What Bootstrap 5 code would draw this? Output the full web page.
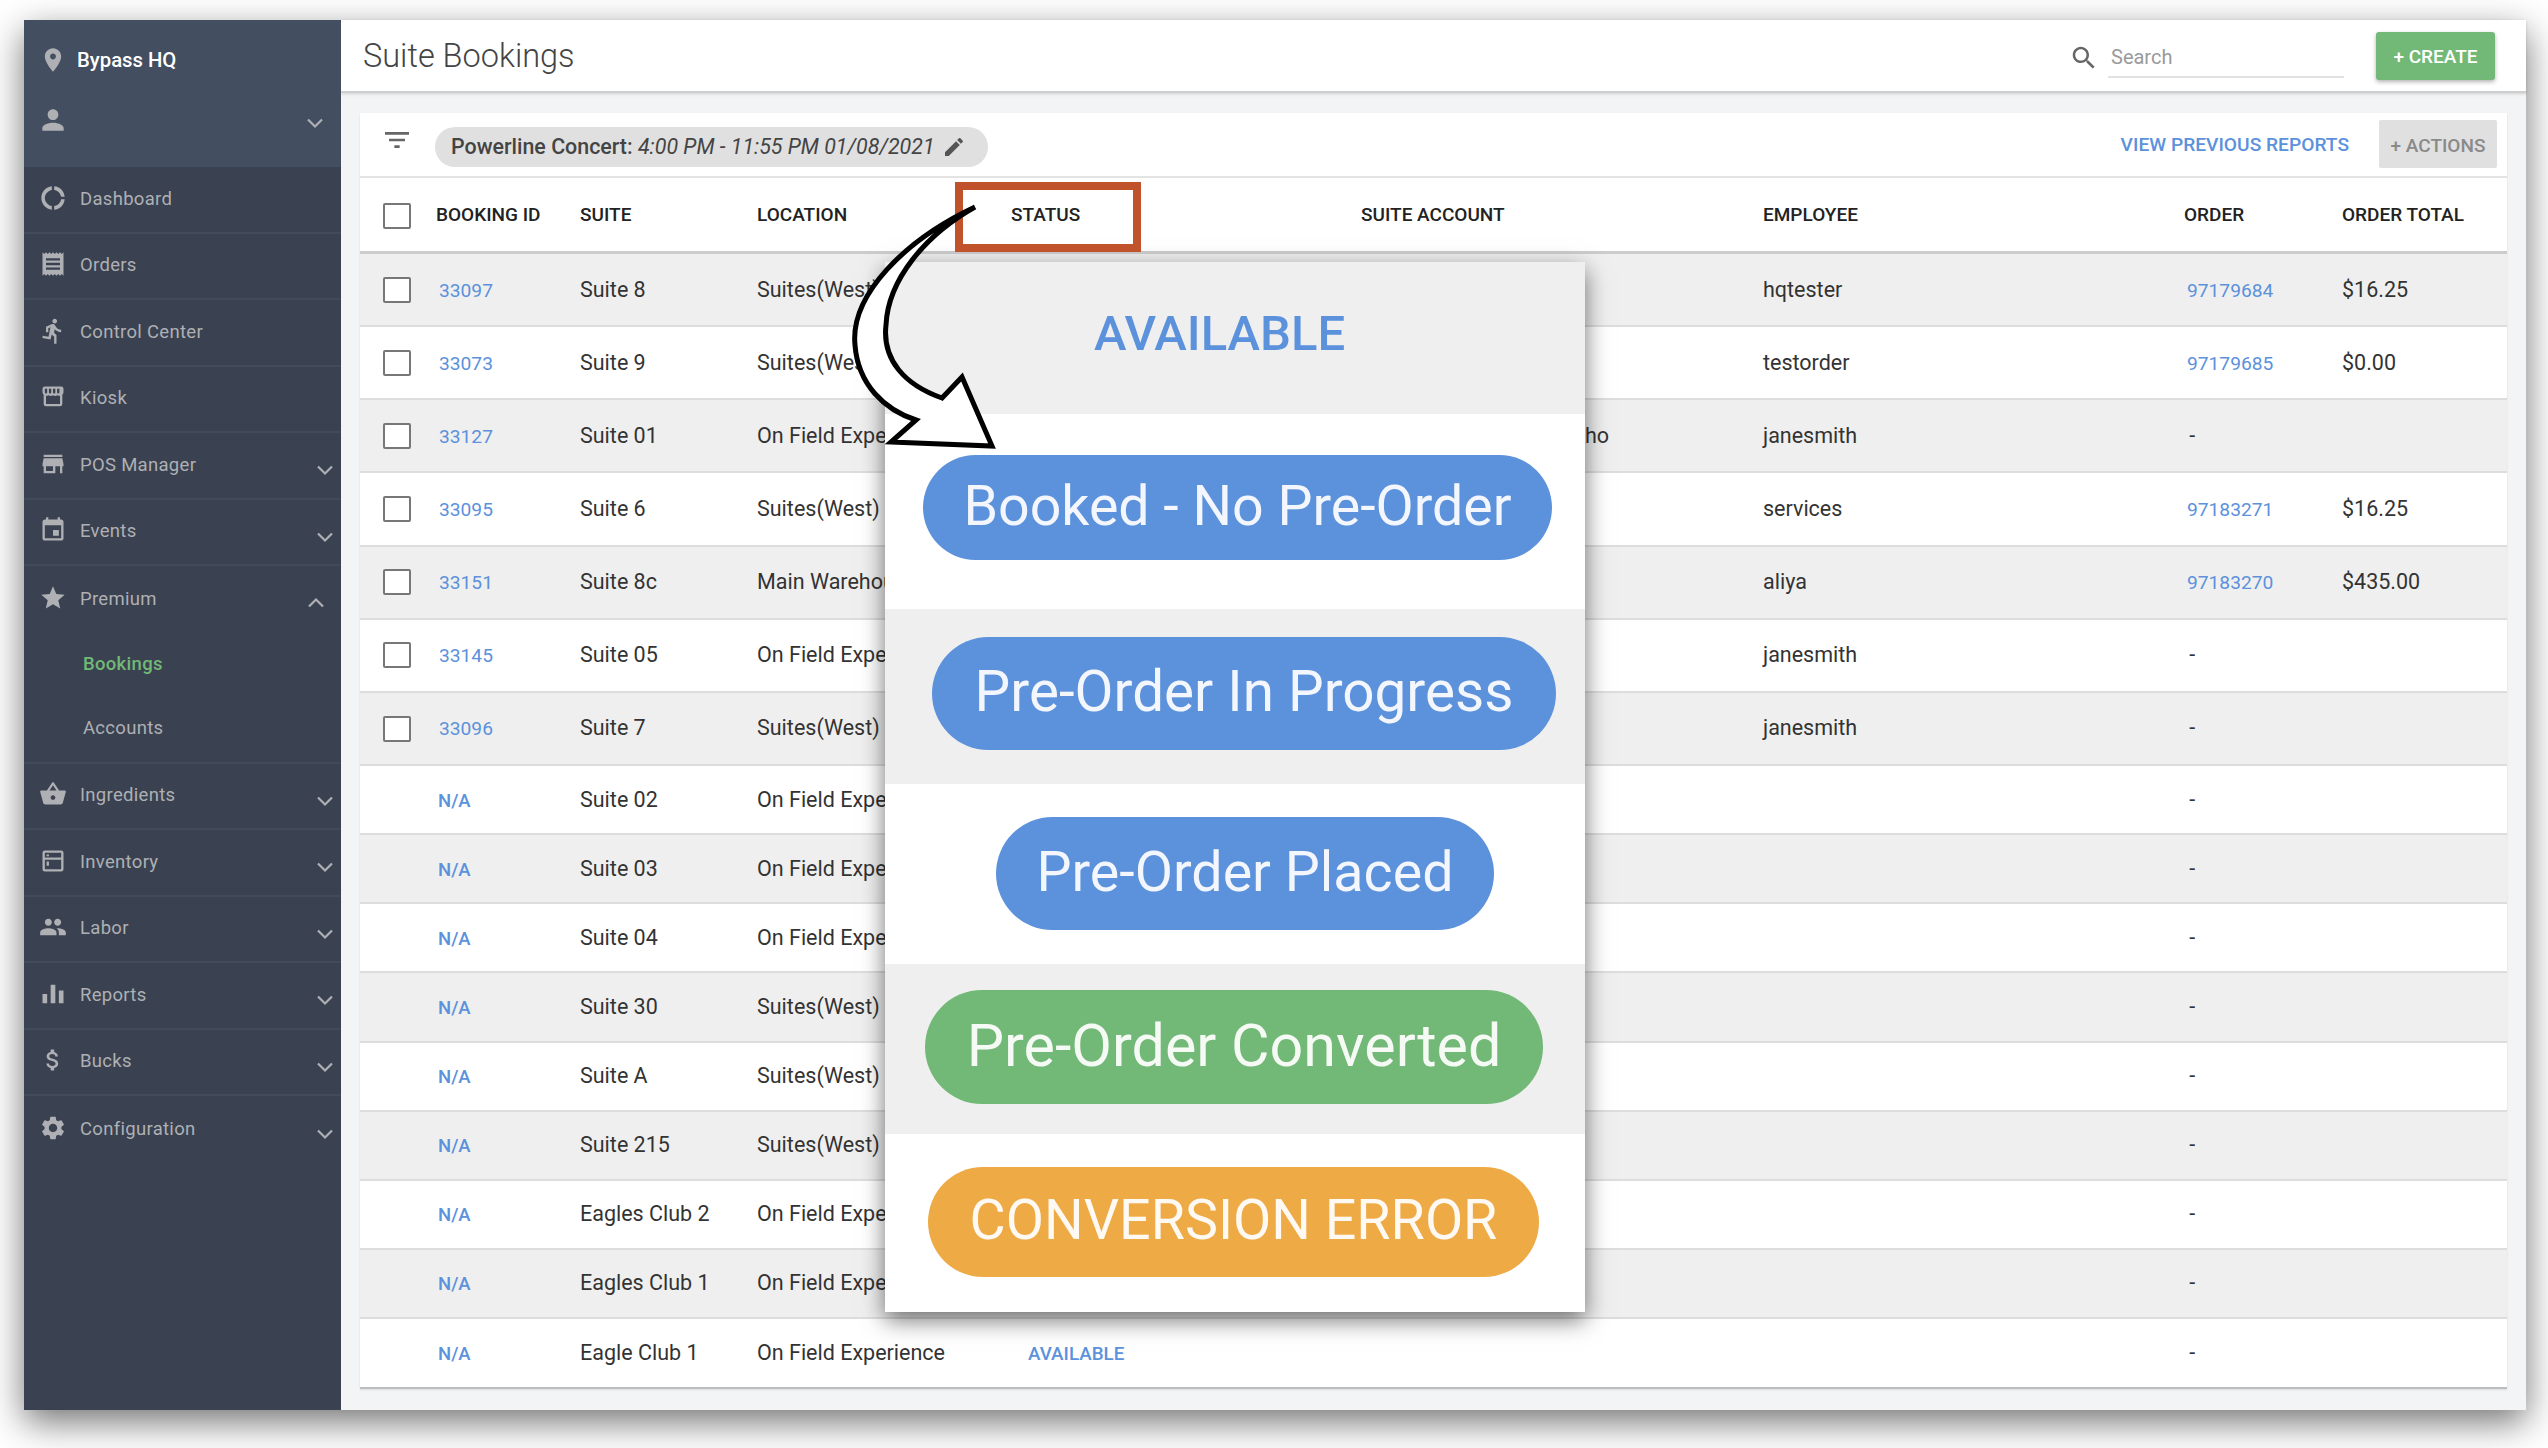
<!DOCTYPE html>
<html lang="en"><head><meta charset="utf-8"><title>Suite Bookings</title>
<link href="https://cdn.jsdelivr.net/npm/bootstrap@5.3.0/dist/css/bootstrap.min.css" rel="stylesheet">
<style>
html,body{height:100%}
body{background:#fff;font-family:Roboto,"Liberation Sans",sans-serif;color:#333;position:relative;overflow:hidden}
.shell{position:absolute;left:24px;top:20px;width:2502px;height:1390px;display:flex;box-shadow:0 12px 34px rgba(0,0,0,.55);background:#f3f4f6}
.side{width:317px;flex:none;background:#3a4150;color:#aeb0b4;z-index:2}
.side-head{height:147px;background:#434e60;position:relative}
.ico{fill:currentColor;flex:none;display:block}
.brand{height:80px;padding-left:15px;gap:10px;color:#fff;font-weight:500;font-size:20.3px}
.brand .ico{color:#aeb0b4}
.who{padding-left:13px;padding-right:14px;height:40px}
.who .chev{margin-top:6px!important}
.navrow{height:66.5px;border-bottom:2px solid #414b5c;padding-left:15px;padding-right:4px;font-size:18.5px;letter-spacing:.3px;gap:13px;color:#aeb0b4}
.navrow .ico{margin-top:-3px}
.navrow .lbl{flex:1;padding-top:1px}
.chev{width:24px;height:24px;fill:none;stroke:#aeb0b4;stroke-width:2.2;flex:none;margin-top:10px}
.chev.open{margin-right:9px;margin-top:8px}
.sub{height:64.5px;padding-left:59px;font-size:18.5px;letter-spacing:.3px}
.sub.on{color:#72b876;font-weight:500}
.subs{border-bottom:2px solid #414b5c}
.main{flex:1;min-width:0;display:flex;flex-direction:column}
.top{height:73px;background:#fff;border-bottom:2px solid #cfcfcf;box-shadow:0 1px 3px rgba(0,0,0,.15);padding-left:22px;padding-right:31px}
.ttl{font-weight:300;font-size:32.5px;color:#444;margin:0;line-height:1;padding-top:1px}
.srch-ico{color:#666;margin-top:5px;margin-right:-3px}
.srch{width:236px;height:40px;border:0;border-bottom:2px solid #e2e2e2;border-radius:0;padding:0 0 0 3px;font-size:20px;font-family:inherit;margin-left:12px;margin-right:32px;margin-top:5px;box-shadow:none}
.srch::placeholder{color:#9a9a9a}
.btn-make{background:#72b876;color:#fff;border:0;border-radius:3px;width:119px;height:48px;font-size:19px;font-weight:500;padding:2px 0 0;margin-top:1px;box-shadow:0 2px 4px rgba(0,0,0,.3)}
.sheet{margin:20px 19px 21px 19px;background:#fff;flex:1;border-bottom:2px solid #bdbdbd;box-shadow:0 1px 2px rgba(0,0,0,.1)}
.bar{height:65px;border-bottom:2px solid #e4e4e4;padding-left:21px;padding-right:10px}
.chip{height:40px;margin-left:22px;margin-top:5px;background:#e0e0e0;border-radius:20px;padding:0 16px;font-size:21.4px;gap:7px;width:553px;color:#444;white-space:nowrap}
.chip b{font-weight:500}
.prev{color:#5c91dc;font-weight:500;font-size:19.2px;margin-right:30px;margin-top:3px;text-decoration:none}
.btn-acts{background:#e0e0e0;color:#8a8a8a;border:0;border-radius:2px;width:118px;height:48px;font-size:19px;font-weight:500;padding:3px 0 0}
.grid{table-layout:fixed;width:2147px;margin:0;--bs-table-striped-bg:#efefef;--bs-table-striped-color:#333;--bs-table-border-color:#ddd;color:#333}
.grid th{height:75px;font-size:19px;font-weight:500;vertical-align:middle;padding:2px 0 0;border-bottom:3px solid #ccc;color:#222}
.grid td{padding:0;vertical-align:middle;font-size:21.5px;border-bottom:2px solid #ddd;white-space:nowrap}
.tall td{height:73.2px}
.low td{height:69.1px}
.c0{width:76px;padding-left:23px!important}.c1{width:144px}.c2{width:177px}.c3{width:254px}.c4{width:350px}.c5{width:402px}.c6{width:421px}.c7{width:158px}.c8{width:165px}
.tick{width:28px;height:26px;border:2px solid #777;border-radius:2px;background:#fff;display:block}
.lnk{color:#5c91dc;text-decoration:none;font-size:19.2px;padding-left:3px}
.na{font-weight:500;font-size:18.5px;padding-left:2px}
.frag{padding-left:224px}
.stat{color:#5c91dc;font-size:18.8px;padding-left:17px;font-weight:500}
.pop{position:absolute;left:885px;top:262px;width:700px;height:1050px;background:#fff;box-shadow:0 8px 22px rgba(0,0,0,.55);z-index:5}
.band{position:relative}
.band.gr{background:#efefef}
.b1{height:152px;color:#5c91dc;font-size:49px;font-weight:500;padding-top:35px;padding-left:209px}
.b2{height:195px;padding-top:41px;padding-left:38px}
.b3{height:175px;padding-top:28px;padding-left:47px}
.b4{height:180px;padding-top:33px;padding-left:111px}
.b5{height:170px;padding-top:26px;padding-left:40px}
.b6{height:178px;padding-top:33px;padding-left:43px}
.pil{display:flex;align-items:center;justify-content:center;color:rgba(255,255,255,.93);border-radius:60px;white-space:nowrap;background:#5c91dc;line-height:1;padding-bottom:2px}
.p2{width:629px;height:105px;font-size:55.5px}.p3{width:624px;height:113px;font-size:56.6px}.p4{width:498px;height:113px;font-size:55.6px}.p5{width:618px;height:114px;font-size:59.2px;background:#72b876}.p6{width:611px;height:110px;font-size:55.6px;background:#eeaa45}
.redbox{position:absolute;left:955px;top:182px;width:186px;height:70px;border:8px solid #c0522c;z-index:6}
.arrow{position:absolute;left:840px;top:195px;width:170px;height:265px;z-index:7}
</style></head>
<body>
<svg width="0" height="0" class="position-absolute"><defs>
<symbol id="i-place" viewBox="0 0 24 24"><path d="M12 2C8.13 2 5 5.13 5 9c0 5.25 7 13 7 13s7-7.75 7-13c0-3.87-3.13-7-7-7zm0 9.5c-1.38 0-2.5-1.12-2.5-2.5s1.12-2.5 2.5-2.5 2.5 1.12 2.5 2.5-1.12 2.5-2.5 2.5z"/></symbol>
<symbol id="i-person" viewBox="0 0 24 24"><path d="M12 12c2.21 0 4-1.79 4-4s-1.79-4-4-4-4 1.79-4 4 1.79 4 4 4zm0 2c-2.67 0-8 1.34-8 4v2h16v-2c0-2.66-5.33-4-8-4z"/></symbol>
<symbol id="i-donut" viewBox="0 0 24 24"><path d="M11 5.08V2c-5 .5-9 4.81-9 10s4 9.5 9 10v-3.08c-3-.48-6-3.4-6-6.92s3-6.44 6-6.92zM18.97 11H22c-.47-5-4-8.53-9-9v3.08C16 5.51 18.54 8 18.97 11zM13 18.92V22c5-.47 8.53-4 9-9h-3.03c-.43 3-2.97 5.49-5.97 5.92z"/></symbol>
<symbol id="i-receipt" viewBox="0 0 24 24"><path d="M18 17H6v-2h12v2zm0-4H6v-2h12v2zm0-4H6V7h12v2zM3 22l1.5-1.5L6 22l1.5-1.5L9 22l1.5-1.5L12 22l1.5-1.5L15 22l1.5-1.5L18 22l1.5-1.5L21 22V2l-1.5 1.5L18 2l-1.5 1.5L15 2l-1.5 1.5L12 2l-1.5 1.5L9 2 7.5 3.5 6 2 4.5 3.5 3 2v20z"/></symbol>
<symbol id="i-run" viewBox="0 0 24 24"><path d="M13.49 5.48c1.1 0 2-.9 2-2s-.9-2-2-2-2 .9-2 2 .9 2 2 2zm-3.6 13.9l1-4.4 2.1 2v6h2v-7.5l-2.1-2 .6-3c1.3 1.5 3.3 2.5 5.5 2.5v-2c-1.9 0-3.5-1-4.3-2.4l-1-1.6c-.4-.6-1-1-1.7-1-.3 0-.5.1-.8.1l-5.2 2.2v4.7h2v-3.4l1.8-.7-1.6 8.1-4.9-1-.4 2 7 1.4z"/></symbol>
<symbol id="i-kiosk" viewBox="0 0 24 24"><path d="M5 3h14a2 2 0 0 1 2 2v3a2.5 2.5 0 0 1-1 2v8a2 2 0 0 1-2 2H6a2 2 0 0 1-2-2v-8a2.5 2.5 0 0 1-1-2V5a2 2 0 0 1 2-2zm0 2v3a1 1 0 0 0 2 0V5H5zm3.5 0v3a1 1 0 0 0 2 0V5h-2zm3.5 0v3a1 1 0 0 0 2 0V5h-2zm3.5 0v3a1 1 0 0 0 2 0V5h-2zM6 11v7h12v-7a3 3 0 0 1-2.2-.6 3.4 3.4 0 0 1-3.8 0 3.4 3.4 0 0 1-3.8 0A3 3 0 0 1 6 11z"/></symbol>
<symbol id="i-store" viewBox="0 0 24 24"><path d="M20 4H4v2h16V4zm1 10v-2l-1-5H4l-1 5v2h1v6h10v-6h4v6h2v-6h1zm-9 4H6v-4h6v4z"/></symbol>
<symbol id="i-event" viewBox="0 0 24 24"><path d="M17 12h-5v5h5v-5zM16 1v2H8V1H6v2H5c-1.11 0-1.99.9-1.99 2L3 19c0 1.1.89 2 2 2h14c1.1 0 2-.9 2-2V5c0-1.1-.9-2-2-2h-1V1h-2zm3 18H5V8h14v11z"/></symbol>
<symbol id="i-star" viewBox="0 0 24 24"><path d="M12 17.27L18.18 21l-1.64-7.03L22 9.24l-7.19-.61L12 2 9.19 8.63 2 9.24l5.46 4.73L5.82 21z"/></symbol>
<symbol id="i-basket" viewBox="0 0 24 24"><path d="M17.21 9l-4.38-6.56c-.19-.28-.51-.42-.83-.42-.32 0-.64.14-.83.43L6.79 9H2c-.55 0-1 .45-1 1 0 .09.01.18.04.27l2.54 9.27c.23.84 1 1.46 1.92 1.46h13c.92 0 1.69-.62 1.93-1.46l2.54-9.27L23 10c0-.55-.45-1-1-1h-4.79zM9 9l3-4.4L15 9H9zm3 8c-1.1 0-2-.9-2-2s.9-2 2-2 2 .9 2 2-.9 2-2 2z"/></symbol>
<symbol id="i-inv" viewBox="0 0 24 24"><path d="M5 3h14a2 2 0 0 1 2 2v14a2 2 0 0 1-2 2H5a2 2 0 0 1-2-2V5a2 2 0 0 1 2-2zm0 2v4h14V5H5zm0 6v8h14v-8H5zm1.5-4.5h2V8h-2V6.500zm0 6h2V16h-2v-3.500z"/></symbol>
<symbol id="i-people" viewBox="0 0 24 24"><path d="M16 11c1.66 0 2.99-1.34 2.99-3S17.66 5 16 5c-1.66 0-3 1.34-3 3s1.34 3 3 3zm-8 0c1.66 0 2.99-1.34 2.99-3S9.66 5 8 5C6.34 5 5 6.34 5 8s1.34 3 3 3zm0 2c-2.33 0-7 1.17-7 3.5V19h14v-2.5c0-2.33-4.67-3.5-7-3.5zm8 0c-.29 0-.62.02-.97.05 1.16.84 1.97 1.97 1.97 3.45V19h6v-2.5c0-2.33-4.67-3.5-7-3.5z"/></symbol>
<symbol id="i-bars" viewBox="0 0 24 24"><path d="M3 12h4v8H3zM10 4h4v16h-4zM17 9h4v11h-4z"/></symbol>
<symbol id="i-money" viewBox="0 0 24 24"><path d="M11.8 10.9c-2.27-.59-3-1.2-3-2.15 0-1.09 1.01-1.85 2.7-1.85 1.78 0 2.44.85 2.5 2.1h2.21c-.07-1.72-1.12-3.3-3.21-3.81V3h-3v2.16c-1.94.42-3.5 1.68-3.5 3.61 0 2.31 1.91 3.46 4.7 4.13 2.5.6 3 1.48 3 2.41 0 .69-.49 1.79-2.7 1.79-2.06 0-2.87-.92-2.98-2.1h-2.2c.12 2.19 1.76 3.42 3.68 3.83V21h3v-2.15c1.95-.37 3.5-1.5 3.5-3.55 0-2.84-2.43-3.81-4.7-4.4z"/></symbol>
<symbol id="i-gear" viewBox="0 0 24 24"><path d="M19.14 12.94c.04-.3.06-.61.06-.94 0-.32-.02-.64-.07-.94l2.03-1.58c.18-.14.23-.41.12-.61l-1.92-3.32c-.12-.22-.37-.29-.59-.22l-2.39.96c-.5-.38-1.03-.7-1.62-.94l-.36-2.54c-.04-.24-.24-.41-.48-.41h-3.84c-.24 0-.43.17-.47.41l-.36 2.54c-.59.24-1.13.57-1.62.94l-2.39-.96c-.22-.08-.47 0-.59.22L2.74 8.87c-.12.21-.08.47.12.61l2.03 1.58c-.05.3-.09.63-.09.94s.02.64.07.94l-2.03 1.58c-.18.14-.23.41-.12.61l1.92 3.32c.12.22.37.29.59.22l2.39-.96c.5.38 1.03.7 1.62.94l.36 2.54c.05.24.24.41.48.41h3.84c.24 0 .44-.17.47-.41l.36-2.54c.59-.24 1.13-.56 1.62-.94l2.39.96c.22.08.47 0 .59-.22l1.92-3.32c.12-.22.07-.47-.12-.61l-2.01-1.58zM12 15.6c-1.98 0-3.6-1.62-3.6-3.6s1.62-3.6 3.6-3.6 3.6 1.62 3.6 3.6-1.62 3.6-3.6 3.6z"/></symbol>
<symbol id="i-filter" viewBox="0 0 24 24"><path d="M10 18h4v-2h-4v2zM3 6v2h18V6H3zm3 7h12v-2H6v2z"/></symbol>
<symbol id="i-search" viewBox="0 0 24 24"><path d="M15.5 14h-.79l-.28-.27C15.41 12.59 16 11.11 16 9.5 16 5.91 13.09 3 9.5 3S3 5.91 3 9.5 5.91 16 9.500 16c1.61 0 3.09-.59 4.23-1.57l.27.28v.79l5 4.99L20.49 19l-4.99-5zm-6 0C7.01 14 5 11.99 5 9.500S7.01 5 9.500 5 14 7.010 14 9.500 11.990 14 9.500 14z"/></symbol>
<symbol id="i-edit" viewBox="0 0 24 24"><path d="M3 17.25V21h3.750L17.810 9.940l-3.750-3.750L3 17.250zM20.710 7.040c.390-.390.390-1.020 0-1.410l-2.340-2.340c-.390-.390-1.020-.390-1.410 0l-1.830 1.830 3.750 3.750 1.830-1.830z"/></symbol>
<symbol id="i-down" viewBox="0 0 24 24"><path d="M5 8.500l7 7 7-7"/></symbol>
<symbol id="i-up" viewBox="0 0 24 24"><path d="M5 15.500l7-7 7 7"/></symbol>
</defs></svg>

<div class="shell">
  <aside class="side">
    <div class="side-head">
      <div class="brand d-flex align-items-center"><svg class="ico" width="28" height="28"><use href="#i-place"/></svg><span>Bypass HQ</span></div>
      <div class="who d-flex align-items-center justify-content-between"><svg class="ico" width="32" height="32"><use href="#i-person"/></svg><svg class="chev m-0" ><use href="#i-down"/></svg></div>
    </div>
    <nav>
      <div class="navrow d-flex align-items-center"><svg class="ico" width="28" height="28"><use href="#i-donut"/></svg><span class="lbl">Dashboard</span></div>
      <div class="navrow d-flex align-items-center"><svg class="ico" width="28" height="28"><use href="#i-receipt"/></svg><span class="lbl">Orders</span></div>
      <div class="navrow d-flex align-items-center"><svg class="ico" width="28" height="28"><use href="#i-run"/></svg><span class="lbl">Control Center</span></div>
      <div class="navrow d-flex align-items-center"><svg class="ico" width="28" height="28"><use href="#i-kiosk"/></svg><span class="lbl">Kiosk</span></div>
      <div class="navrow d-flex align-items-center"><svg class="ico" width="28" height="28"><use href="#i-store"/></svg><span class="lbl">POS Manager</span><svg class="chev"><use href="#i-down"/></svg></div>
      <div class="navrow d-flex align-items-center"><svg class="ico" width="28" height="28"><use href="#i-event"/></svg><span class="lbl">Events</span><svg class="chev"><use href="#i-down"/></svg></div>
      <div class="navrow d-flex align-items-center border-0"><svg class="ico" width="28" height="28"><use href="#i-star"/></svg><span class="lbl">Premium</span><svg class="chev open"><use href="#i-up"/></svg></div>
      <div class="subs">
        <div class="sub on d-flex align-items-center">Bookings</div>
        <div class="sub d-flex align-items-center">Accounts</div>
      </div>
      <div class="navrow d-flex align-items-center"><svg class="ico" width="28" height="28"><use href="#i-basket"/></svg><span class="lbl">Ingredients</span><svg class="chev"><use href="#i-down"/></svg></div>
      <div class="navrow d-flex align-items-center"><svg class="ico" width="28" height="28"><use href="#i-inv"/></svg><span class="lbl">Inventory</span><svg class="chev"><use href="#i-down"/></svg></div>
      <div class="navrow d-flex align-items-center"><svg class="ico" width="28" height="28"><use href="#i-people"/></svg><span class="lbl">Labor</span><svg class="chev"><use href="#i-down"/></svg></div>
      <div class="navrow d-flex align-items-center"><svg class="ico" width="28" height="28"><use href="#i-bars"/></svg><span class="lbl">Reports</span><svg class="chev"><use href="#i-down"/></svg></div>
      <div class="navrow d-flex align-items-center"><svg class="ico" width="28" height="28"><use href="#i-money"/></svg><span class="lbl">Bucks</span><svg class="chev"><use href="#i-down"/></svg></div>
      <div class="navrow d-flex align-items-center border-0"><svg class="ico" width="28" height="28"><use href="#i-gear"/></svg><span class="lbl">Configuration</span><svg class="chev"><use href="#i-down"/></svg></div>
    </nav>
  </aside>
  <main class="main">
    <header class="top d-flex align-items-center">
      <h1 class="ttl flex-grow-1">Suite Bookings</h1>
      <svg class="ico srch-ico" width="30" height="30"><use href="#i-search"/></svg>
      <input class="form-control srch" placeholder="Search" aria-label="Search">
      <button class="btn btn-make" type="button">+ CREATE</button>
    </header>
    <section class="sheet">
      <div class="bar d-flex align-items-center">
        <svg class="ico" width="32" height="32" style="color:#666;margin-top:-8px"><use href="#i-filter"/></svg>
        <div class="chip d-flex align-items-center"><span><b>Powerline Concert:</b> <i>4:00 PM - 11:55 PM 01/08/2021</i></span><svg class="ico" width="24" height="24" style="color:#555"><use href="#i-edit"/></svg></div>
        <div class="flex-grow-1"></div>
        <a class="prev" href="#">VIEW PREVIOUS REPORTS</a>
        <button class="btn btn-acts" type="button">+ ACTIONS</button>
      </div>
      <table class="table table-striped grid">
        <colgroup><col class="c0"><col class="c1"><col class="c2"><col class="c3"><col class="c4"><col class="c5"><col class="c6"><col class="c7"><col class="c8"></colgroup>
        <thead><tr><th class="c0"><span class="tick"></span></th><th>BOOKING ID</th><th>SUITE</th><th>LOCATION</th><th>STATUS</th><th>SUITE ACCOUNT</th><th>EMPLOYEE</th><th>ORDER</th><th>ORDER TOTAL</th></tr></thead>
        <tbody>
          <tr class="tall"><td class="c0"><span class="tick"></span></td><td><a class="lnk" href="#">33097</a></td><td>Suite 8</td><td>Suites(West)</td><td></td><td></td><td>hqtester</td><td><a class="lnk" href="#">97179684</a></td><td>$16.25</td></tr>
          <tr class="tall"><td class="c0"><span class="tick"></span></td><td><a class="lnk" href="#">33073</a></td><td>Suite 9</td><td>Suites(West)</td><td></td><td></td><td>testorder</td><td><a class="lnk" href="#">97179685</a></td><td>$0.00</td></tr>
          <tr class="tall"><td class="c0"><span class="tick"></span></td><td><a class="lnk" href="#">33127</a></td><td>Suite 01</td><td>On Field Experience</td><td></td><td><span class="frag">ho</span></td><td>janesmith</td><td>&nbsp;-</td><td></td></tr>
          <tr class="tall"><td class="c0"><span class="tick"></span></td><td><a class="lnk" href="#">33095</a></td><td>Suite 6</td><td>Suites(West)</td><td></td><td></td><td>services</td><td><a class="lnk" href="#">97183271</a></td><td>$16.25</td></tr>
          <tr class="tall"><td class="c0"><span class="tick"></span></td><td><a class="lnk" href="#">33151</a></td><td>Suite 8c</td><td>Main Warehouse</td><td></td><td></td><td>aliya</td><td><a class="lnk" href="#">97183270</a></td><td>$435.00</td></tr>
          <tr class="tall"><td class="c0"><span class="tick"></span></td><td><a class="lnk" href="#">33145</a></td><td>Suite 05</td><td>On Field Experience</td><td></td><td></td><td>janesmith</td><td>&nbsp;-</td><td></td></tr>
          <tr class="tall"><td class="c0"><span class="tick"></span></td><td><a class="lnk" href="#">33096</a></td><td>Suite 7</td><td>Suites(West)</td><td></td><td></td><td>janesmith</td><td>&nbsp;-</td><td></td></tr>
          <tr class="low"><td class="c0"></td><td><a class="lnk na" href="#">N/A</a></td><td>Suite 02</td><td>On Field Experience</td><td></td><td></td><td></td><td>&nbsp;-</td><td></td></tr>
          <tr class="low"><td class="c0"></td><td><a class="lnk na" href="#">N/A</a></td><td>Suite 03</td><td>On Field Experience</td><td></td><td></td><td></td><td>&nbsp;-</td><td></td></tr>
          <tr class="low"><td class="c0"></td><td><a class="lnk na" href="#">N/A</a></td><td>Suite 04</td><td>On Field Experience</td><td></td><td></td><td></td><td>&nbsp;-</td><td></td></tr>
          <tr class="low"><td class="c0"></td><td><a class="lnk na" href="#">N/A</a></td><td>Suite 30</td><td>Suites(West)</td><td></td><td></td><td></td><td>&nbsp;-</td><td></td></tr>
          <tr class="low"><td class="c0"></td><td><a class="lnk na" href="#">N/A</a></td><td>Suite A</td><td>Suites(West)</td><td></td><td></td><td></td><td>&nbsp;-</td><td></td></tr>
          <tr class="low"><td class="c0"></td><td><a class="lnk na" href="#">N/A</a></td><td>Suite 215</td><td>Suites(West)</td><td></td><td></td><td></td><td>&nbsp;-</td><td></td></tr>
          <tr class="low"><td class="c0"></td><td><a class="lnk na" href="#">N/A</a></td><td>Eagles Club 2</td><td>On Field Experience</td><td></td><td></td><td></td><td>&nbsp;-</td><td></td></tr>
          <tr class="low"><td class="c0"></td><td><a class="lnk na" href="#">N/A</a></td><td>Eagles Club 1</td><td>On Field Experience</td><td></td><td></td><td></td><td>&nbsp;-</td><td></td></tr>
          <tr class="low"><td class="c0 border-0"></td><td class="border-0"><a class="lnk na" href="#">N/A</a></td><td class="border-0">Eagle Club 1</td><td class="border-0">On Field Experience</td><td class="border-0"><span class="stat">AVAILABLE</span></td><td class="border-0"></td><td class="border-0"></td><td class="border-0">&nbsp;-</td><td class="border-0"></td></tr>
        </tbody>
      </table>
    </section>
  </main>
</div>

<div class="redbox"></div>
<div class="pop">
  <div class="band gr b1">AVAILABLE</div>
  <div class="band b2"><div class="pil p2">Booked - No Pre-Order</div></div>
  <div class="band gr b3"><div class="pil p3">Pre-Order In Progress</div></div>
  <div class="band b4"><div class="pil p4">Pre-Order Placed</div></div>
  <div class="band gr b5"><div class="pil p5">Pre-Order Converted</div></div>
  <div class="band b6"><div class="pil p6">CONVERSION ERROR</div></div>
</div>
<svg class="arrow" viewBox="840 195 170 265"><path d="M975 207C905 240 850 295 855 345C858 385 885 410 916 420L891 442L992 446L962 377L942 398C905 385 882 360 886 325C888 280 925 235 975 207Z" fill="#fff" stroke="#000" stroke-width="5"/></svg>
</body></html>
